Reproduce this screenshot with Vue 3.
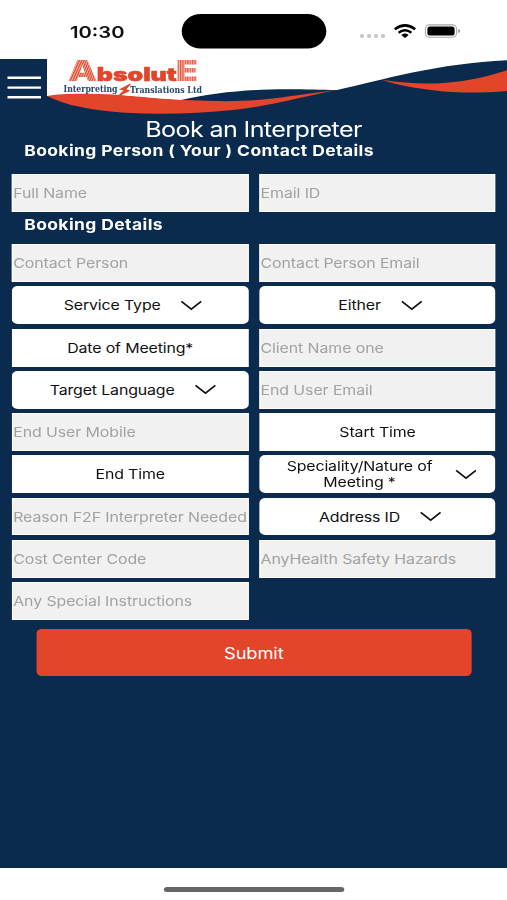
<script setup>
const personFields = [
  { type: 'input', label: 'Full Name' },
  { type: 'input', label: 'Email ID' },
]
const bookingFields = [
  { type: 'input', label: 'Contact Person' },
  { type: 'input', label: 'Contact Person Email' },
  { type: 'select', label: 'Service Type' },
  { type: 'select', label: 'Either' },
  { type: 'button', label: 'Date of Meeting*' },
  { type: 'input', label: 'Client Name one' },
  { type: 'select', label: 'Target Language' },
  { type: 'input', label: 'End User Email' },
  { type: 'input', label: 'End User Mobile' },
  { type: 'button', label: 'Start Time' },
  { type: 'button', label: 'End Time' },
  { type: 'select', label: 'Speciality/Nature of Meeting *' },
  { type: 'input', label: 'Reason F2F Interpreter Needed' },
  { type: 'select', label: 'Address ID' },
  { type: 'input', label: 'Cost Center Code' },
  { type: 'input', label: 'AnyHealth Safety Hazards' },
  { type: 'input', label: 'Any Special Instructions' },
]
const groups = [
  { title: 'Booking Person ( Your ) Contact Details', kind: 'person', fields: personFields },
  { title: 'Booking Details', kind: 'booking', fields: bookingFields },
]
</script>

<template>
  <div class="viewport">
    <div class="screen">
      <svg class="top" viewBox="0 0 507 119" preserveAspectRatio="none">
        <defs>
          <pattern id="rightSlant" width="2.4" height="4" patternUnits="userSpaceOnUse" patternTransform="skewX(-24)">
            <rect width="2.4" height="4" fill="#f6b9ac" />
            <rect width="1.3" height="4" fill="#e2452a" />
          </pattern>
          <pattern id="upright" width="2.4" height="4" patternUnits="userSpaceOnUse">
            <rect width="2.4" height="4" fill="#f6b9ac" />
            <rect width="1.2" height="4" fill="#e4563e" />
          </pattern>
        </defs>
        <!-- status bar -->
        <text class="clock" x="70" y="37.6" textLength="54.5" lengthAdjust="spacingAndGlyphs">10:30</text>
        <rect x="181.7" y="14" width="144.6" height="34.5" rx="19" ry="17.25" fill="#000" />
        <g fill="#c4c4c6">
          <circle cx="362" cy="36" r="2.1" /><circle cx="369" cy="36" r="2.1" />
          <circle cx="376" cy="36" r="2.1" /><circle cx="383" cy="36" r="2.1" />
        </g>
        <g fill="none" stroke="#000" stroke-width="2.5">
          <path d="M394.8 29.2Q405 21.6 415.2 29.2" />
          <path d="M398.6 32.8Q405 27.8 411.4 32.8" />
        </g>
        <path d="M401.3 35Q405 32.2 408.7 35L405 38Z" fill="#000" />
        <rect x="425.4" y="24.9" width="31.2" height="12.4" rx="4.2" fill="none" stroke="#a8a8a8" stroke-width="1.1" />
        <rect x="427.4" y="26.6" width="27.2" height="9" rx="2.6" fill="#000" />
        <path d="M458 29Q460.3 29.5 460.3 31.1T458 33.2Z" fill="#a8a8a8" />
        <!-- waves -->
        <path d="M47 96L181 100C215 93 242 89.5 286 89.3C305 89.2 320 90 337 90C382 80 440 63 507 60.3V119H0V59H47Z" fill="#0a2b4d" />
        <path d="M47 96C62 93 88 93.2 117 94.7C145 96.5 157 99 200 100.6C262 103 278 97 337 90C307 95.5 268 106.5 235 109.7C195 114 160 114.8 125 112.7C93 110.5 65 105.5 47 96Z" fill="#e2452a" />
        <path d="M182 99.6C160 98.6 135 96 117 94.7L182 94Z" fill="#fff" />
        <path d="M382 79.8C405 83.5 424 84.3 444 83C470 81 490 76 507 70.3V91C483 93 457 93.3 435 90.5C414 88 398 85.3 382 79.8Z" fill="#e2452a" />
        <path d="M7.5 77.8H41M7.5 87.6H41M7.5 97.3H41" stroke="#fff" stroke-width="2.4" />
        <!-- logo -->
        <g class="mark">
          <text x="67.8" y="80.9" textLength="29.5" lengthAdjust="spacingAndGlyphs" fill="url(#rightSlant)">A</text>
          <text class="word" x="96.8" y="80.9" textLength="80" lengthAdjust="spacingAndGlyphs">bsolut</text>
          <text x="175.8" y="80.9" textLength="22.5" lengthAdjust="spacingAndGlyphs" fill="url(#upright)">E</text>
        </g>
        <g class="tagline">
          <text x="63.5" y="91.8" textLength="54" lengthAdjust="spacingAndGlyphs">Interpreting</text>
          <text x="130" y="92.8" textLength="72" lengthAdjust="spacingAndGlyphs">Translations Ltd</text>
        </g>
        <path d="M130.5 84L120.5 89.2L124.5 90L119 95.5L129 90.8L125.5 89.5Z" fill="#e2452a" stroke="#e2452a" />
      </svg>

      <main>
        <h1>Book an Interpreter</h1>
        <section v-for="group in groups" :key="group.kind" :class="group.kind">
          <h2>{{ group.title }}</h2>
          <div class="grid">
            <template v-for="field in group.fields" :key="field.label">
              <input v-if="field.type === 'input'" :placeholder="field.label" />
              <button v-else :class="field.type">
                <span>{{ field.label }}</span>
                <svg v-if="field.type === 'select'" viewBox="0 0 22 12" preserveAspectRatio="none">
                  <path d="M1 1.5L11 10L21 1.5" />
                </svg>
              </button>
            </template>
          </div>
        </section>
        <button class="submit">Submit</button>
      </main>
      <footer><i></i></footer>
    </div>
  </div>
</template>

<style>
body { margin: 0; background: #fff; }
</style>

<style scoped>
* { box-sizing: border-box; }
.viewport { width: 507px; height: 900px; overflow: hidden; background: #fff; }
/* 430pt wide layout stretched to the window width */
.screen {
  width: 430px; height: 900px; display: flex; flex-direction: column;
  transform: scaleX(1.17907); transform-origin: 0 0;
  font-family: Inter, "Liberation Sans", sans-serif;
}
.top { display: block; width: 430px; height: 119px; flex: none; }
.clock { font-size: 16.6px; font-weight: 600; fill: #111; }
.mark { font-family: Inter, sans-serif; font-weight: 900; font-size: 28.5px; }
.mark .word { font-size: 18.4px; fill: #e2452a; stroke: #e2452a; stroke-width: .5; }
.tagline { font-family: "DejaVu Serif", serif; font-weight: 700; font-size: 8.8px; fill: #27466a; }
main { height: 748.5px; flex: none; background: #0a2b4d; color: #fff; display: flex; flex-direction: column; }
h1 { margin: 0; height: 21px; line-height: 21px; font-size: 21.3px; font-weight: 400; text-align: center; letter-spacing: -.54px; }
h2 { margin: 0; padding-left: 20.5px; height: 22px; line-height: 23px; font-size: 14.8px; font-weight: 700; letter-spacing: .35px; }
.person h2 { margin-bottom: 12px; }
.booking h2 { margin: 2.5px 0 7.8px; }
.grid { display: grid; grid-template-columns: 1fr 1fr; column-gap: 9.4px; row-gap: 4.35px; grid-auto-rows: 37.9px; padding: 0 9.6px 0 10.2px; }
input, button { font-family: inherit; font-size: 13.5px; border: 0; margin: 0; min-width: 0; border-radius: 0; }
input { width: 100%; padding: 0; border: 1px solid #fff; background: #f1f1f1; color: #111; letter-spacing: -.08px; }
input::placeholder { color: #a2a2a2; opacity: 1; }
button { background: #fff; color: #111; display: flex; align-items: center; justify-content: center; letter-spacing: -.12px; padding: 0; }
.select { border-radius: 5px; gap: 17px; padding-left: 5px; }
.select span { max-width: 128px; line-height: 16px; }
.select svg { width: 18.5px; height: 11px; flex: none; }
.select path { fill: none; stroke: #111; stroke-width: 1.7; }
.submit { margin: 9.5px 30.5px 0 31px; padding-top: 1px; height: 47px; flex: none; background: #e2452a; color: #fff; border-radius: 4.5px; font-size: 15.5px; letter-spacing: -.08px; }
footer { flex: 1; display: flex; justify-content: center; align-items: center; padding-top: 12px; background: #fff; }
footer i { width: 153px; height: 4.6px; border-radius: 3px; background: #666; }
</style>
